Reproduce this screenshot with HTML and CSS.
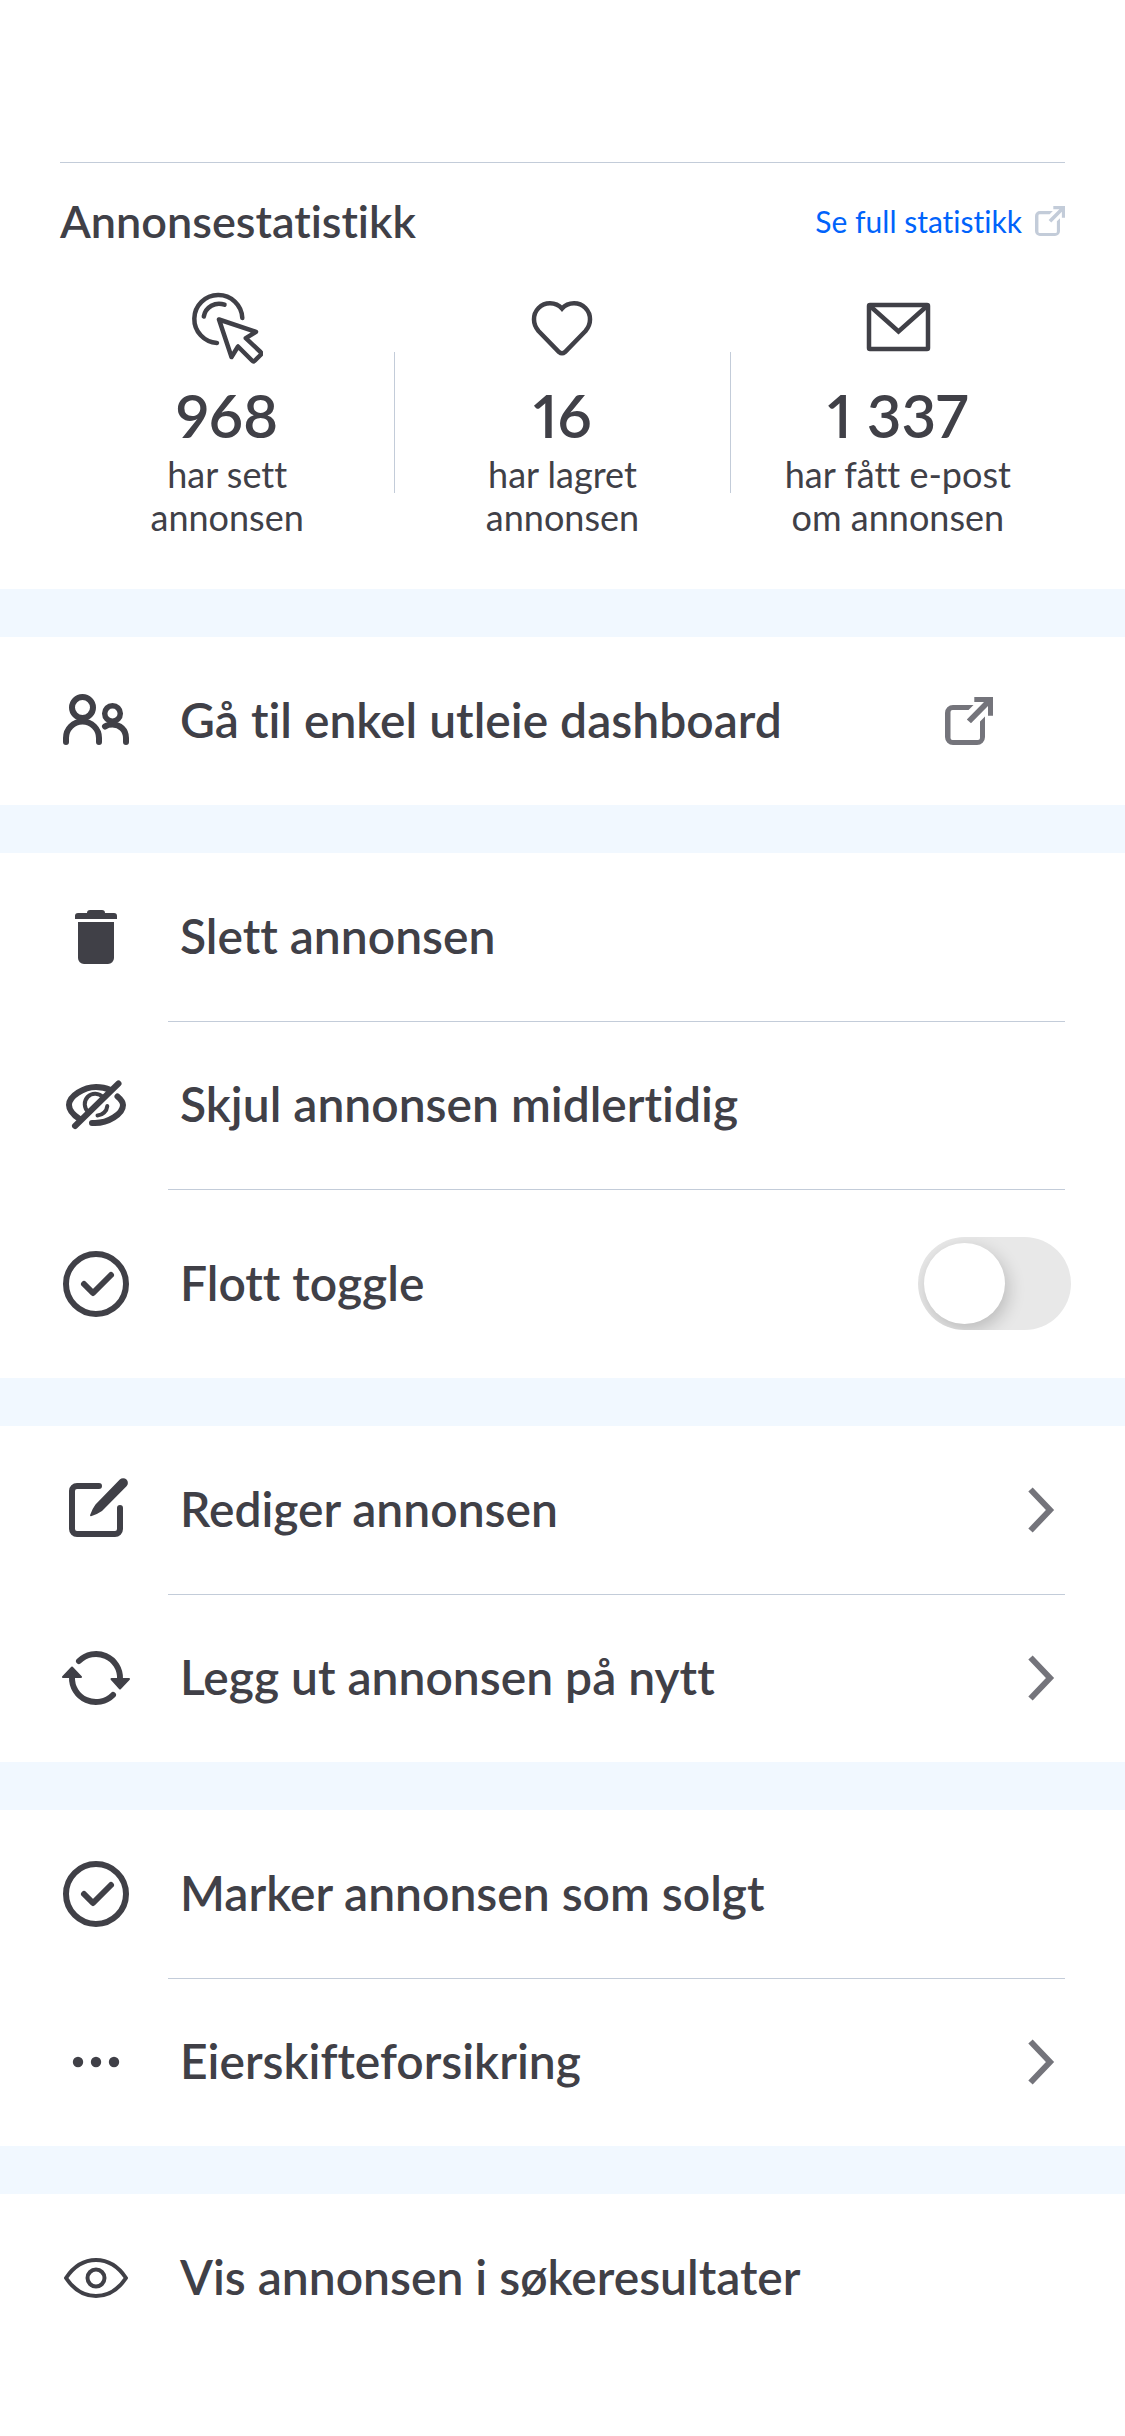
FILE: index.html
```html
<!DOCTYPE html>
<html lang="no">
<head>
<meta charset="utf-8">
<meta name="viewport" content="width=device-width, initial-scale=1">
<title>Annonsestatistikk</title>
<link rel="stylesheet" href="styles.css">
</head>
<body>
<svg class="sprite" aria-hidden="true">
  <symbol id="external" viewBox="0 0 48 48">
    <path fill="currentColor" d="M28.500 8H8a8 8 0 0 0-8 8v24a8 8 0 0 0 8 8h24a8 8 0 0 0 8-8V19.500l-5 5V41a2 2 0 0 1-2 2H7.500a2 2 0 0 1-2-2V15a2 2 0 0 1 2-2h16zM29.300 0H48v18.700h-5V9L26 26.200 21.800 22.500 39 5h-9.700z"/>
  </symbol>
  <symbol id="chevron" viewBox="0 0 27 46">
    <path fill="none" stroke="currentColor" stroke-width="6" d="M2.500 2.500L22 23 2.500 43.500"/>
  </symbol>
  <symbol id="check" viewBox="0 0 72 72">
    <g fill="none" stroke="currentColor" stroke-width="6" stroke-linecap="round" stroke-linejoin="round">
      <circle cx="36" cy="36" r="30"/>
      <path d="M24 36l9 9 18-18"/>
    </g>
  </symbol>
</svg>
<main class="page">
  <section class="stats">
    <header class="stats-header">
      <h1 class="stats-title">Annonsestatistikk</h1>
      <a class="stats-link" href="#statistikk">Se full statistikk
        <svg class="stats-link-icon" aria-hidden="true"><use href="#external"/></svg>
      </a>
    </header>
    <div class="stats-grid">
      <div class="stat">
        <svg class="icon" viewBox="0 0 72 72" aria-hidden="true">
          <g fill="none" stroke="currentColor" stroke-width="4.500" stroke-linecap="round" stroke-linejoin="round">
            <path d="M51.300 26A24 24 0 1 0 26 51"/>
            <path d="M12.800 24.500A15.500 15.500 0 0 1 33.500 12.700"/>
            <path d="M28 27.500l37 12.300-10.200 6.400L69.500 60q1.500 1.500 0 3l-5.500 5.500q-1.500 1.500-3 0L47 54.500 40.500 65z"/>
          </g>
        </svg>
        <strong class="stat-value">968</strong>
        <span class="stat-label">har sett<br>annonsen</span>
      </div>
      <span class="stat-divider"></span>
      <div class="stat">
        <svg class="icon" viewBox="0 0 72 72" aria-hidden="true">
          <path fill="none" stroke="currentColor" stroke-width="4.500" d="M36 16.500C33 13 28.500 11.200 24 11.200A16 16 0 0 0 8 27.500C8 32 10 36 12.500 39L33 60Q36 62.500 39 60L59.500 39C62 36 64 32 64 27.500A16 16 0 0 0 48 11.200C43.500 11.200 39 13 36 16.500z"/>
        </svg>
        <strong class="stat-value">16</strong>
        <span class="stat-label">har lagret<br>annonsen</span>
      </div>
      <span class="stat-divider"></span>
      <div class="stat">
        <svg class="icon" viewBox="0 0 72 72" aria-hidden="true">
          <g fill="none" stroke="currentColor" stroke-width="4.500">
            <rect x="7" y="13" width="59" height="44" rx="1"/>
            <path d="M8 14l28.500 25.500L65 14"/>
          </g>
        </svg>
        <strong class="stat-value">1 337</strong>
        <span class="stat-label">har fått e-post<br>om annonsen</span>
      </div>
    </div>
  </section>

  <section class="group">
    <a class="row row-external" href="#dashboard">
      <svg class="icon" viewBox="0 0 72 72" aria-hidden="true">
        <g fill="none" stroke="currentColor" stroke-width="6" stroke-linecap="round">
          <circle cx="22.500" cy="22.500" r="10.500"/>
          <path d="M6 57v-4a16.500 16.500 0 0 1 33 0v4"/>
          <circle cx="52.500" cy="28.500" r="7.800" stroke-width="5.500"/>
          <path d="M45 41.500C47 40 50 39.500 52.500 39.500 60 39.500 66 45 66 53v4"/>
        </g>
      </svg>
      <span class="row-title">Gå til enkel utleie dashboard</span>
      <svg class="external" aria-hidden="true"><use href="#external"/></svg>
    </a>
  </section>

  <section class="group">
    <button class="row" type="button">
      <svg class="icon" viewBox="0 0 72 72" aria-hidden="true">
        <path fill="currentColor" d="M15 18v-3a3 3 0 0 1 3-3h9a3 3 0 0 1 3-3h12a3 3 0 0 1 3 3h9a3 3 0 0 1 3 3v3zM18 21h36v36a6 6 0 0 1-6 6H24a6 6 0 0 1-6-6z"/>
      </svg>
      <span class="row-title">Slett annonsen</span>
    </button>
    <button class="row" type="button">
      <svg class="icon" viewBox="0 0 72 72" aria-hidden="true">
        <g fill="none" stroke="currentColor" stroke-width="6" stroke-linecap="round">
          <path d="M50.500 21C46 19 41 18 36 18 24 18 9 27 9 36c0 5 4.500 10 10.500 14"/>
          <path d="M57.500 27.500C61 30.500 63 33 63 36c0 9-15 18-28 18h-3"/>
          <path d="M15 57l43.500-42.500"/>
          <path stroke-width="4" d="M43 28.500A10.300 10.300 0 1 0 28.500 43M47.300 37A10.500 10.500 0 0 1 37.500 46.500"/>
        </g>
      </svg>
      <span class="row-title">Skjul annonsen midlertidig</span>
    </button>
    <label class="row row-toggle">
      <svg class="icon" aria-hidden="true"><use href="#check"/></svg>
      <span class="row-title">Flott toggle</span>
      <input class="toggle" type="checkbox" role="switch">
    </label>
  </section>

  <section class="group">
    <a class="row" href="#rediger">
      <svg class="icon" viewBox="0 0 72 72" aria-hidden="true">
        <path fill="none" stroke="currentColor" stroke-width="6" stroke-linecap="round" d="M39 12H17a5 5 0 0 0-5 5v38a5 5 0 0 0 5 5h38a5 5 0 0 0 5-5V34"/>
        <path fill="currentColor" d="M59.800 5.600a4.700 4.700 0 0 1 6.700 6.700L42 37q-5 3.500-11 5.200-1.200 0-.9-1.200 2-6 5.400-10.500z"/>
      </svg>
      <span class="row-title">Rediger annonsen</span>
      <svg class="chevron" aria-hidden="true"><use href="#chevron"/></svg>
    </a>
    <a class="row" href="#nytt">
      <svg class="icon" viewBox="0 0 72 72" aria-hidden="true">
        <path fill="none" stroke="currentColor" stroke-width="6" stroke-linecap="round" d="M19 19A24 24 0 0 1 60 37M53 53A24 24 0 0 1 12 35"/>
        <path fill="currentColor" stroke="currentColor" stroke-width="2" stroke-linejoin="round" d="M51.500 37h17.500l-9 9.500zM3 35h18l-9-9.500z"/>
      </svg>
      <span class="row-title">Legg ut annonsen på nytt</span>
      <svg class="chevron" aria-hidden="true"><use href="#chevron"/></svg>
    </a>
  </section>

  <section class="group">
    <button class="row" type="button">
      <svg class="icon" aria-hidden="true"><use href="#check"/></svg>
      <span class="row-title">Marker annonsen som solgt</span>
    </button>
    <a class="row" href="#eierskifte">
      <svg class="icon" viewBox="0 0 72 72" aria-hidden="true">
        <g fill="currentColor"><circle cx="18" cy="36" r="5.200"/><circle cx="36" cy="36" r="5.200"/><circle cx="54" cy="36" r="5.200"/></g>
      </svg>
      <span class="row-title">Eierskifteforsikring</span>
      <svg class="chevron" aria-hidden="true"><use href="#chevron"/></svg>
    </a>
  </section>

  <section class="group">
    <a class="row" href="#resultater">
      <svg class="icon" viewBox="0 0 72 72" aria-hidden="true">
        <g fill="none" stroke="currentColor" stroke-width="4" stroke-linejoin="round">
          <path d="M6 36C14 24 24 18 36 18s22 6 30 18C58 48 48 54 36 54S14 48 6 36z"/>
          <circle cx="36" cy="36" r="8.500"/>
        </g>
      </svg>
      <span class="row-title">Vis annonsen i søkeresultater</span>
    </a>
  </section>
</main>
</body>
</html>
```
FILE: styles.css
```css
:root {
  --text: #404047;
  --muted: #74747b;
  --line: #c3ccd9;
  --band: #f1f8ff;
  --link: #0063fb;
}

* { box-sizing: border-box; }

body {
  margin: 0;
  background: #fff;
  color: var(--text);
  font-family: Lato, "Liberation Sans", sans-serif;
  font-weight: 600;
  font-variant-ligatures: none;
}

.sprite { display: none; }

.page { padding-top: 162px; }

.icon {
  flex: none;
  display: block;
  width: 72px;
  height: 72px;
}

/* Statistics */

.stats {
  margin: 0 60px;
  padding: 29px 0 50px;
  border-top: 1px solid var(--line);
}

.stats-header {
  display: flex;
  align-items: center;
  justify-content: space-between;
  height: 58px;
  margin-bottom: 42px;
}

.stats-title {
  margin: 0;
  font-size: 45px;
  line-height: 56px;
  font-weight: 600;
}

.stats-link {
  display: flex;
  align-items: center;
  gap: 13px;
  color: var(--link);
  font-size: 30px;
  line-height: 36px;
  font-weight: 400;
  text-decoration: none;
}

.stats-link-icon {
  width: 30px;
  height: 30px;
  color: var(--line);
}

.stats-grid {
  display: grid;
  grid-template-columns: 1fr 1px 1fr 1px 1fr;
}

.stat {
  display: flex;
  flex-direction: column;
  align-items: center;
  text-align: center;
}

.stat-value {
  margin-top: 15px;
  font-size: 60px;
  line-height: 72px;
  font-weight: 600;
  font-variant-numeric: proportional-nums;
}

.stat-label {
  margin-top: 2px;
  font-size: 36px;
  line-height: 43px;
  font-weight: 400;
}

.stat-divider {
  height: 141px;
  margin-top: 60px;
  background: var(--line);
}

/* Action rows */

.group { border-top: 48px solid var(--band); }

.row {
  position: relative;
  display: flex;
  align-items: center;
  width: 100%;
  min-height: 168px;
  padding: 0 60px;
  border: 0;
  background: none;
  color: inherit;
  font: inherit;
  font-variant-ligatures: none;
  text-align: left;
  text-decoration: none;
}

.row + .row::before {
  content: "";
  position: absolute;
  top: 0;
  left: 168px;
  right: 60px;
  height: 1px;
  background: var(--line);
}

.row-title {
  flex: 1;
  margin-left: 48px;
  padding-bottom: 2px;
  font-size: 48px;
  line-height: 58px;
}

.row-external { padding-right: 132px; }

.row-toggle {
  min-height: 189px;
  padding-right: 54px;
}

.external {
  width: 48px;
  height: 48px;
  color: var(--muted);
}

.chevron {
  width: 27px;
  height: 46px;
  margin-right: 10px;
  color: var(--muted);
}

.toggle {
  appearance: none;
  display: flex;
  width: 153px;
  height: 93px;
  margin: 0;
  padding: 6px;
  border-radius: 47px;
  background: #e8e8e8;
  overflow: hidden;
}

.toggle::before {
  content: "";
  width: 81px;
  height: 81px;
  border-radius: 50%;
  background: #fff;
  box-shadow: 3px 6px 18px rgba(0, 0, 0, 0.2);
}

.toggle:checked {
  justify-content: flex-end;
  background: var(--link);
}
```
